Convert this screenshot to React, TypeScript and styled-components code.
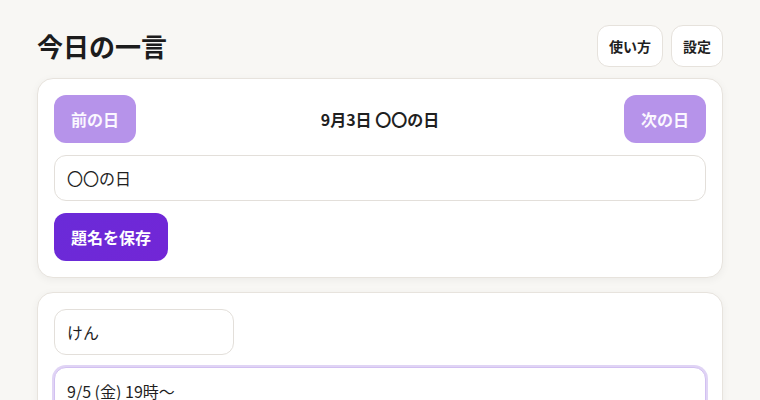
import React from "react";
import styled, { createGlobalStyle } from "styled-components";

const Global = createGlobalStyle`
  html, body {
    margin: 0;
    padding: 0;
    background: #f8f7f4;
  }
  body {
    font-family: "Noto Sans CJK JP", "Noto Sans", sans-serif;
    color: #1f1f1f;
  }
  * { box-sizing: border-box; }
`;

const Page = styled.div`
  padding: 25px 37px 0;
  display: flex;
  flex-direction: column;
  gap: 14px;
`;

const Header = styled.header`
  display: flex;
  align-items: center;
  justify-content: space-between;
  height: 42px;
  margin-bottom: -3px;
`;

const Title = styled.h1`
  margin: 0;
  font-size: 26px;
  font-weight: 700;
  line-height: 1;
  color: #1c1c1c;
`;

const HeaderActions = styled.div`
  display: flex;
  gap: 8px;
`;

const GhostButton = styled.button`
  height: 42px;
  padding: 0 11px;
  border: 1px solid #e6e2dc;
  border-radius: 12px;
  background: #fff;
  font-family: inherit;
  font-size: 14px;
  font-weight: 700;
  color: #1f1f1f;
`;

const Card = styled.section`
  background: #fff;
  border: 1px solid #e7e3dd;
  border-radius: 16px;
  box-shadow: 0 2px 8px rgba(0, 0, 0, 0.05);
  padding: 16px;
  display: flex;
  flex-direction: column;
  align-items: flex-start;
  gap: 12px;
`;

const NavRow = styled.div`
  align-self: stretch;
  display: flex;
  align-items: center;
  justify-content: space-between;
`;

const DateLabel = styled.div`
  font-size: 16px;
  font-weight: 700;
  color: #1f1f1f;
`;

const PrimaryButton = styled.button<{ $muted?: boolean }>`
  height: 48px;
  padding: 0 16px;
  border: 1px solid transparent;
  border-radius: 12px;
  background: ${(p) =>
    p.$muted ? "#b693ea" : "linear-gradient(135deg, #6a2bd8, #7226d6)"};
  color: ${(p) => (p.$muted ? "#fbf8ff" : "#fff")};
  font-family: inherit;
  font-size: 16px;
  font-weight: 700;
`;

const TextInput = styled.input<{ $width?: string }>`
  width: ${(p) => p.$width ?? "100%"};
  height: 46px;
  padding: 0 12px;
  border: 1px solid #e3dfda;
  border-radius: 12px;
  background: #fff;
  font-family: inherit;
  font-size: 16px;
  color: #1f1f1f;
  outline: none;
`;

const TextArea = styled.textarea`
  width: 100%;
  height: 80px;
  padding: 11px 12px;
  border: 1px solid #d2c0f1;
  box-shadow: 0 0 0 2px #e0d4f5;
  border-radius: 12px;
  background: #fff;
  font-family: inherit;
  font-size: 16px;
  line-height: 1.5;
  color: #1f1f1f;
  resize: none;
  outline: none;
`;

export default function App() {
  return (
    <>
      <Global />
      <Page>
        <Header>
          <Title>今日の一言</Title>
          <HeaderActions>
            <GhostButton>使い方</GhostButton>
            <GhostButton>設定</GhostButton>
          </HeaderActions>
        </Header>
        <Card>
          <NavRow>
            <PrimaryButton $muted>前の日</PrimaryButton>
            <DateLabel>9月3日 〇〇の日</DateLabel>
            <PrimaryButton $muted>次の日</PrimaryButton>
          </NavRow>
          <TextInput defaultValue="〇〇の日" />
          <PrimaryButton>題名を保存</PrimaryButton>
        </Card>
        <Card>
          <TextInput $width="180px" defaultValue="けん" />
          <TextArea defaultValue={"9/5 (金) 19時〜"} />
        </Card>
      </Page>
    </>
  );
}
